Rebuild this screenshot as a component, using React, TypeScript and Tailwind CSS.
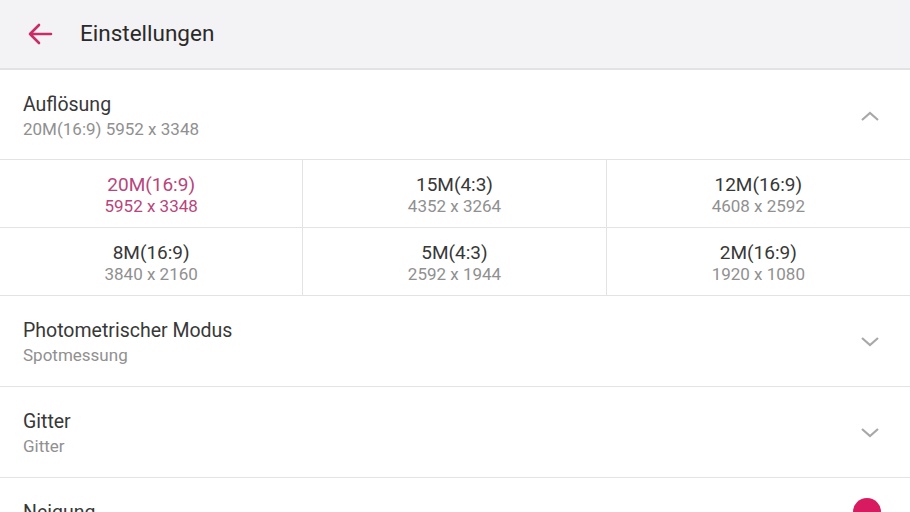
import React from "react";

const cells = [
  { t: "20M(16:9)", s: "5952 x 3348", active: true },
  { t: "15M(4:3)", s: "4352 x 3264" },
  { t: "12M(16:9)", s: "4608 x 2592" },
  { t: "8M(16:9)", s: "3840 x 2160" },
  { t: "5M(4:3)", s: "2592 x 1944" },
  { t: "2M(16:9)", s: "1920 x 1080" },
];

function Chevron({ up }: { up?: boolean }) {
  return (
    <svg width="20" height="12" viewBox="0 0 20 12" className="text-[#a8a8a8]">
      {up ? (
        <path d="M2 10 L10 3 L18 10" fill="none" stroke="currentColor" strokeWidth="2.2" />
      ) : (
        <path d="M2 2 L10 9 L18 2" fill="none" stroke="currentColor" strokeWidth="2.2" />
      )}
    </svg>
  );
}

function Row({ title, sub, up, h }: { title: string; sub: string; up?: boolean; h: string }) {
  return (
    <div className={`flex ${h} items-center justify-between border-b border-[#e3e3e3] pl-[23px] pr-[30px]`}>
      <div className="mt-[3px] flex flex-col">
        <div className="text-[19.5px] leading-[25px] text-[#383838]">{title}</div>
        <div className="mt-[1px] text-[17px] leading-[23px] text-[#909090]">{sub}</div>
      </div>
      <div className="mt-[2px]">
        <Chevron up={up} />
      </div>
    </div>
  );
}

export default function App() {
  return (
    <div
      className="h-[512px] w-[910px] overflow-hidden bg-white"
      style={{ fontFamily: "Roboto, 'Noto Sans', sans-serif" }}
    >
      <div className="flex h-[70px] items-center border-b-2 border-[#e2e1e3] bg-[#f3f2f4] pl-[26px]">
        <svg width="28" height="24" viewBox="0 0 28 24" className="text-[#cc2c66]">
          <path
            d="M25 12 H4 M13 3 L4 12 L13 21"
            fill="none"
            stroke="currentColor"
            strokeWidth="2.6"
            strokeLinecap="round"
            strokeLinejoin="round"
          />
        </svg>
        <div className="ml-[26px] text-[22.5px] text-[#2a2a2a]">Einstellungen</div>
      </div>
      <Row title="Auflösung" sub="20M(16:9) 5952 x 3348" up h="h-[90px]" />
      <div className="grid grid-cols-3">
        {cells.map((c, i) => (
          <div
            key={i}
            className={`flex h-[68px] flex-col items-center justify-center border-b border-[#e3e3e3] pt-[2px] ${
              i % 3 !== 2 ? "border-r" : ""
            }`}
          >
            <div
              className={`text-[19px] leading-[23px] ${c.active ? "text-[#b8457c]" : "text-[#383838]"}`}
            >
              {c.t}
            </div>
            <div
              className={`text-[17px] leading-[21px] ${c.active ? "text-[#b8457c]" : "text-[#909090]"}`}
            >
              {c.s}
            </div>
          </div>
        ))}
      </div>
      <Row title="Photometrischer Modus" sub="Spotmessung" h="h-[91px]" />
      <Row title="Gitter" sub="Gitter" h="h-[91px]" />
      <div className="relative flex h-[90px] items-start pl-[23px] pt-[22px]">
        <div className="text-[19.5px] leading-[25px] text-[#383838]">Neigung</div>
        <div className="absolute left-[853px] top-[20px] h-[28px] w-[28px] rounded-full bg-[#d81b60]" />
      </div>
    </div>
  );
}
